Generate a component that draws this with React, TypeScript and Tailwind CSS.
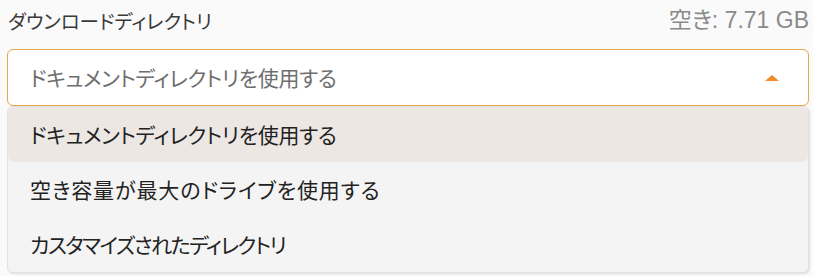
export default function App() {
  const options = [
    "ドキュメントディレクトリを使用する",
    "空き容量が最大のドライブを使用する",
    "カスタマイズされたディレクトリ",
  ];

  return (
    <div className="w-[813px] h-[276px] bg-[#fafafa] pl-[7px] pr-[4px] font-['Noto_Sans_CJK_JP',sans-serif] [font-feature-settings:'palt']">
      <div className="h-[41px] flex items-center justify-between">
        <p className="pl-[1px] text-[19.5px] text-[#3a3a3a]">ダウンロードディレクトリ</p>
        <p className="text-[23px] text-[#8a8a8a] font-['Liberation_Sans','Noto_Sans_CJK_JP',sans-serif]">
          空き: 7.71 GB
        </p>
      </div>

      <div className="mt-[8px] h-[57px] flex items-center justify-between bg-white border border-[#e6a748] rounded-[6px] pl-[22px] pr-[29px]">
        <span className="text-[21px] tracking-[-0.3px] text-[#6e6e6e]">{options[0]}</span>
        <svg width="14" height="6" viewBox="0 0 14 6">
          <path d="M7 0 L14 6 L0 6 Z" fill="#f28c28" />
        </svg>
      </div>

      <div className="h-[167px] bg-[#f4f4f4] border border-[#e2e2e2] rounded-[6px] shadow-[1px_1px_2px_rgba(0,0,0,0.12)] flex flex-col">
        {options.map((el, id) => (
          <div
            key={id}
            className={`h-[55px] flex items-center pl-[22px] text-[21px] text-[#222] rounded-[6px] ${
              id === 0 ? "bg-[#ece7e3] tracking-[-0.3px]" : ""
            } ${id === 1 ? "tracking-[0.9px]" : ""} ${id === 2 ? "tracking-[-1.5px]" : ""}`}
          >
            {el}
          </div>
        ))}
      </div>
    </div>
  );
}
